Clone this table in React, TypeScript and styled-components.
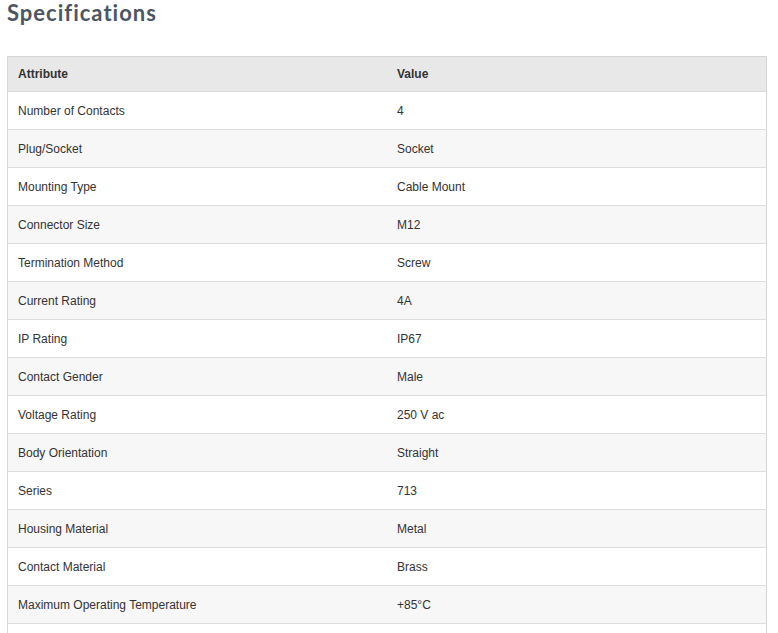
import React from "react";
import styled, { createGlobalStyle } from "styled-components";

const GlobalStyle = createGlobalStyle`
  html, body { margin: 0; padding: 0; background: #ffffff; }
  body { font-family: "Liberation Sans", Arial, sans-serif; }
`;

const Page = styled.div`
  padding: 0 11px 0 7px;
`;

const Heading = styled.h2`
  margin: 0 0 30px 0;
  font-family: "Lato", "DejaVu Sans", sans-serif;
  font-weight: 700;
  font-size: 22px;
  line-height: 26px;
  color: #4b5663;
  letter-spacing: 1px;
`;

const Table = styled.table`
  width: 760px;
  border-collapse: collapse;
  border: 1px solid #d6d6d6;
  table-layout: fixed;
  font-family: "Liberation Sans", Arial, sans-serif;
  font-size: 12px;
  color: #333333;
`;

const HeadCell = styled.th`
  text-align: left;
  font-weight: 700;
  background: #e8e8e8;
  height: 34px;
  padding: 0 10px;
  border-bottom: 1px solid #d9d9d9;
`;

const Row = styled.tr<{ $shade: boolean }>`
  background: ${(p) => (p.$shade ? "#f7f7f7" : "#ffffff")};
`;

const Cell = styled.td`
  height: 37px;
  padding: 0 10px;
  border-bottom: 1px solid #dddddd;
  vertical-align: middle;
`;

const specs: [string, string][] = [
  ["Number of Contacts", "4"],
  ["Plug/Socket", "Socket"],
  ["Mounting Type", "Cable Mount"],
  ["Connector Size", "M12"],
  ["Termination Method", "Screw"],
  ["Current Rating", "4A"],
  ["IP Rating", "IP67"],
  ["Contact Gender", "Male"],
  ["Voltage Rating", "250 V ac"],
  ["Body Orientation", "Straight"],
  ["Series", "713"],
  ["Housing Material", "Metal"],
  ["Contact Material", "Brass"],
  ["Maximum Operating Temperature", "+85°C"],
  ["Minimum Operating Temperature", "-40°C"],
];

export default function App() {
  return (
    <>
      <GlobalStyle />
      <Page>
        <Heading>Specifications</Heading>
        <Table>
          <thead>
            <tr>
              <HeadCell>Attribute</HeadCell>
              <HeadCell>Value</HeadCell>
            </tr>
          </thead>
          <tbody>
            {specs.map(([k, v], i) => (
              <Row key={k} $shade={i % 2 === 1}>
                <Cell>{k}</Cell>
                <Cell>{v}</Cell>
              </Row>
            ))}
          </tbody>
        </Table>
      </Page>
    </>
  );
}
